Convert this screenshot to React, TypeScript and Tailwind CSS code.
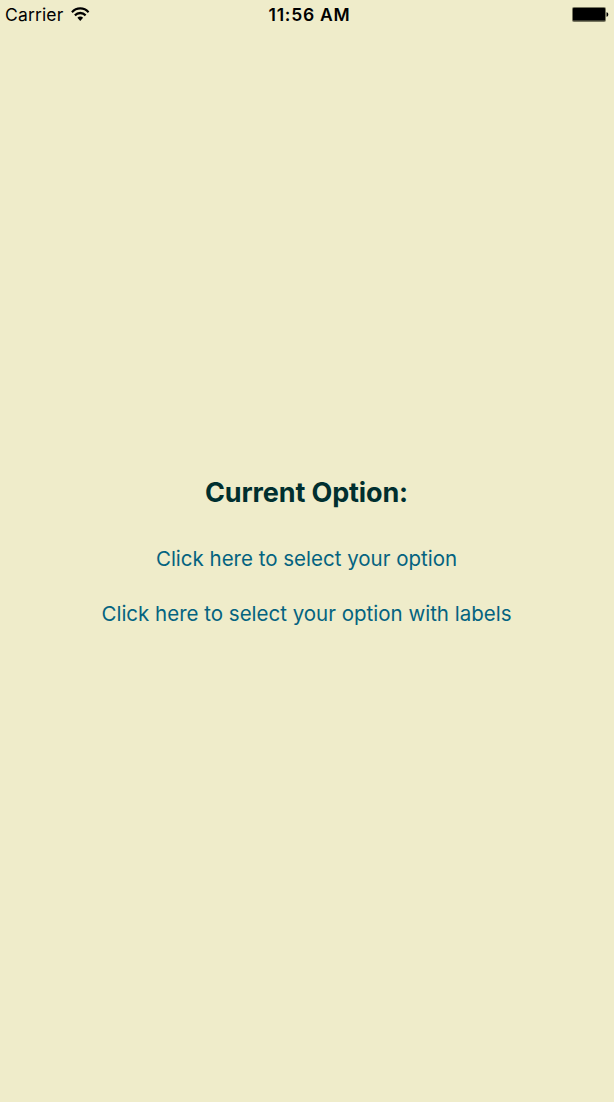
export default function App() {
  return (
    <div className="flex h-[1102px] w-full flex-col bg-[#efecca] font-['Inter',sans-serif]">
      <header className="grid h-[29px] grid-cols-3 items-center px-[5px] text-[17.5px] leading-[29px] text-black">
        <div className="flex items-center gap-[8px]">
          <span className="tracking-[0.15px]">Carrier</span>
          <svg className="mb-[2px]" width="18.5" height="14" viewBox="0 0 20 14" preserveAspectRatio="none" fill="none" stroke="#000" strokeWidth="2.3">
            <path d="M1 5.2a12.7 12.7 0 0 1 18 0M4.2 8.4a8.2 8.2 0 0 1 11.6 0" />
            <path d="M6.9 10.8a4.4 4.4 0 0 1 6.2 0L10 13.9z" fill="#000" stroke="none" />
          </svg>
        </div>
        <span className="pl-[5px] text-center font-[560] tracking-[0.75px]">11:56 AM</span>
        <svg className="justify-self-end" width="37" height="15" viewBox="0 0 37 15">
          <rect width="34" height="15" rx="2" fill="#77765f" />
          <rect x="1" y="1" width="32" height="12.5" rx="0.5" fill="#000" />
          <path d="M34.5 5.2c2.4.3 2.4 4.3 0 4.6z" />
        </svg>
      </header>
      <main className="flex flex-col items-center pt-[447px] pr-px">
        <h1 className="text-[27px] leading-[34px] font-bold tracking-[-0.13px] text-[#002f2f]">Current Option:</h1>
        <button className="mt-[35px] text-[20.5px] leading-[28px] text-[#046380]">Click here to select your option</button>
        <button className="mt-[27px] text-[20.5px] leading-[28px] text-[#046380]">Click here to select your option with labels</button>
      </main>
    </div>
  );
}
